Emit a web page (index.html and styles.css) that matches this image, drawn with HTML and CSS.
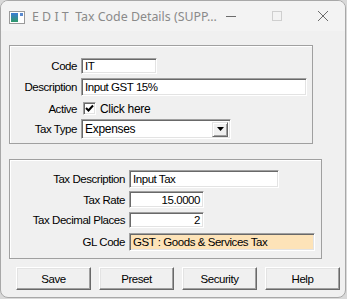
FILE: index.html
```html
<!DOCTYPE html>
<html>
<head>
<meta charset="utf-8">
<link rel="stylesheet" href="styles.css">
</head>
<body>
<div class="window">
  <div class="titlebar">
    <svg class="app-icon" width="16" height="13" viewBox="0 0 16 13">
      <defs>
        <linearGradient id="g" x1="0" y1="0" x2="0" y2="1">
          <stop offset="0" stop-color="#3a7bd5"/>
          <stop offset="1" stop-color="#2f9a6a"/>
        </linearGradient>
      </defs>
      <rect x="0.5" y="0.5" width="15" height="12" fill="#fff" stroke="#9a9a9a"/>
      <rect x="2" y="2" width="7" height="9" fill="url(#g)"/>
      <rect x="11" y="2" width="3" height="3" fill="#5a8ad0"/>
    </svg>
    <span class="title">E D I T&nbsp; Tax Code Details (SUPP...</span>
    <div class="caption-btns">
      <svg class="cap" width="12" height="12" viewBox="0 0 12 12"><line x1="1" y1="6.5" x2="11" y2="6.5" stroke="#6b6b6b" stroke-width="1"/></svg>
      <svg class="cap" width="12" height="12" viewBox="0 0 12 12"><rect x="1.5" y="1.5" width="9" height="9" fill="none" stroke="#cfcfcf" stroke-width="1"/></svg>
      <svg class="cap" width="12" height="12" viewBox="0 0 12 12"><path d="M1 1 L11 11 M11 1 L1 11" stroke="#6b6b6b" stroke-width="1"/></svg>
    </div>
  </div>
  <div class="body">
    <div class="group group-a">
      <div class="row r1"><label class="lbl">Code</label><div class="tb code">IT</div></div>
      <div class="row r2"><label class="lbl">Description</label><div class="tb desc">Input GST 15%</div></div>
      <div class="row r3"><label class="lbl">Active</label>
        <span class="chk"><svg width="11" height="11" viewBox="0 0 11 11"><path d="M2 5 L4.5 7.5 L9 2.5" fill="none" stroke="#000" stroke-width="2"/></svg></span>
        <span class="chk-text">Click here</span>
      </div>
      <div class="row r4"><label class="lbl">Tax Type</label>
        <div class="combo"><span class="combo-text">Expenses</span>
          <span class="combo-btn"><svg width="7" height="4" viewBox="0 0 7 4"><path d="M0 0 H7 L3.5 4 Z" fill="#000"/></svg></span>
        </div>
      </div>
    </div>
    <div class="group group-b">
      <div class="row s1"><label class="lbl2">Tax Description</label><div class="tb taxdesc">Input Tax</div></div>
      <div class="row s2"><label class="lbl2">Tax Rate</label><div class="tb num">15.0000</div></div>
      <div class="row s3"><label class="lbl2">Tax Decimal Places</label><div class="tb num">2</div></div>
      <div class="row s4"><label class="lbl2">GL Code</label><div class="tb gl">GST : Goods &amp; Services Tax</div></div>
    </div>
    <div class="buttons">
      <button class="btn">Save</button>
      <button class="btn">Preset</button>
      <button class="btn">Security</button>
      <button class="btn">Help</button>
    </div>
  </div>
</div>
</body>
</html>
```

FILE: styles.css
```css
html, body {
  margin: 0;
  padding: 0;
}
body {
  width: 347px;
  height: 299px;
  background: #d9d9d9;
  overflow: hidden;
  font-family: "Liberation Sans", Arial, sans-serif;
  font-size: 11.5px;
  letter-spacing: -0.45px;
  color: #000;
}
.window {
  box-sizing: border-box;
  width: 346px;
  height: 298px;
  border: 1px solid #a8a8a8;
  border-radius: 8px;
  background: #f0f0f0;
  overflow: hidden;
  display: flex;
  flex-direction: column;
}
.titlebar {
  height: 30px;
  flex: none;
  background: #f3f3f3;
  display: flex;
  align-items: center;
}
.app-icon {
  margin-left: 8px;
  margin-top: 2px;
}
.title {
  margin-left: 7px;
  font-family: "Noto Sans", "Open Sans", sans-serif;
  font-size: 12.4px;
  letter-spacing: 0;
  color: #8a8a8a;
  white-space: nowrap;
}
.caption-btns {
  margin-left: auto;
  display: flex;
  align-items: center;
  margin-right: 16px;
  gap: 34px;
}
.body {
  flex: 1;
  display: flex;
  flex-direction: column;
  padding: 0 0 0 8px;
}
.group {
  border: 1px solid #a0a0a0;
  box-shadow: inset 1px 1px 0 #ffffff;
  display: flex;
  flex-direction: column;
}
.group-a {
  margin-top: 14px;
  width: 304px;
  padding-top: 12px;
  box-sizing: border-box;
  height: 99px;
}
.group-b {
  margin-top: 15px;
  width: 313px;
  height: 100px;
  box-sizing: border-box;
  padding-top: 10px;
}
.row {
  display: flex;
  align-items: center;
}
.lbl {
  width: 67px;
  text-align: right;
  margin-right: 4px;
  flex: none;
}
.lbl2 {
  width: 115px;
  text-align: right;
  margin-right: 4px;
  flex: none;
}
.r1 { height: 16px; }
.r2 { height: 18px; margin-top: 4px; }
.r3 { height: 17px; margin-top: 4px; }
.r4 { height: 20px; margin-top: 2px; }
.s1 { height: 18px; }
.s2 { height: 17px; margin-top: 3px; }
.s3 { height: 16px; margin-top: 4px; }
.s4 { height: 18px; margin-top: 5px; }
.tb {
  box-sizing: border-box;
  height: 100%;
  background: #fff;
  border: 1px solid;
  border-color: #a0a0a0 #ffffff #ffffff #a0a0a0;
  box-shadow: inset 1px 1px 0 #696969, inset -1px -1px 0 #e3e3e3;
  padding: 0 3px;
  display: flex;
  align-items: center;
  white-space: nowrap;
}
.code { width: 76px; }
.desc { width: 226px; }
.taxdesc { width: 150px; }
.num { width: 75px; justify-content: flex-end; }
.gl {
  width: 186px;
  background: #fde3b8;
}
.chk {
  box-sizing: border-box;
  width: 13px;
  height: 13px;
  margin-left: 2px;
  background: #fff;
  border: 1px solid;
  border-color: #a0a0a0 #ffffff #ffffff #a0a0a0;
  box-shadow: inset 1px 1px 0 #696969, inset -1px -1px 0 #e3e3e3;
  display: flex;
  align-items: center;
  justify-content: center;
}
.chk-text {
  margin-left: 4px;
  font-size: 12px;
  letter-spacing: -0.3px;
}
.combo {
  box-sizing: border-box;
  width: 150px;
  height: 100%;
  background: #fff;
  border: 1px solid;
  border-color: #a0a0a0 #ffffff #ffffff #a0a0a0;
  box-shadow: inset 1px 1px 0 #696969, inset -1px -1px 0 #e3e3e3;
  display: flex;
  align-items: center;
  padding: 2px 2px 2px 3px;
}
.combo-text {
  flex: 1;
  font-size: 12px;
  letter-spacing: -0.3px;
}
.combo-btn {
  box-sizing: border-box;
  width: 16px;
  height: 15px;
  background: #f0f0f0;
  border: 1px solid;
  border-color: #e3e3e3 #696969 #696969 #e3e3e3;
  box-shadow: inset 1px 1px 0 #fff, inset -1px -1px 0 #a0a0a0;
  display: flex;
  align-items: center;
  justify-content: center;
}
.buttons {
  display: flex;
  gap: 8px;
  margin-top: 8px;
  margin-left: 7px;
}
.btn {
  box-sizing: border-box;
  width: 75px;
  height: 23px;
  margin: 0;
  padding: 0;
  background: #f0f0f0;
  border: 1px solid;
  border-color: #ffffff #696969 #696969 #ffffff;
  box-shadow: inset -1px -1px 0 #a0a0a0, inset 1px 1px 0 #e3e3e3;
  font-family: "Liberation Sans", Arial, sans-serif;
  font-size: 11.5px;
  letter-spacing: -0.45px;
  color: #000;
}
```
